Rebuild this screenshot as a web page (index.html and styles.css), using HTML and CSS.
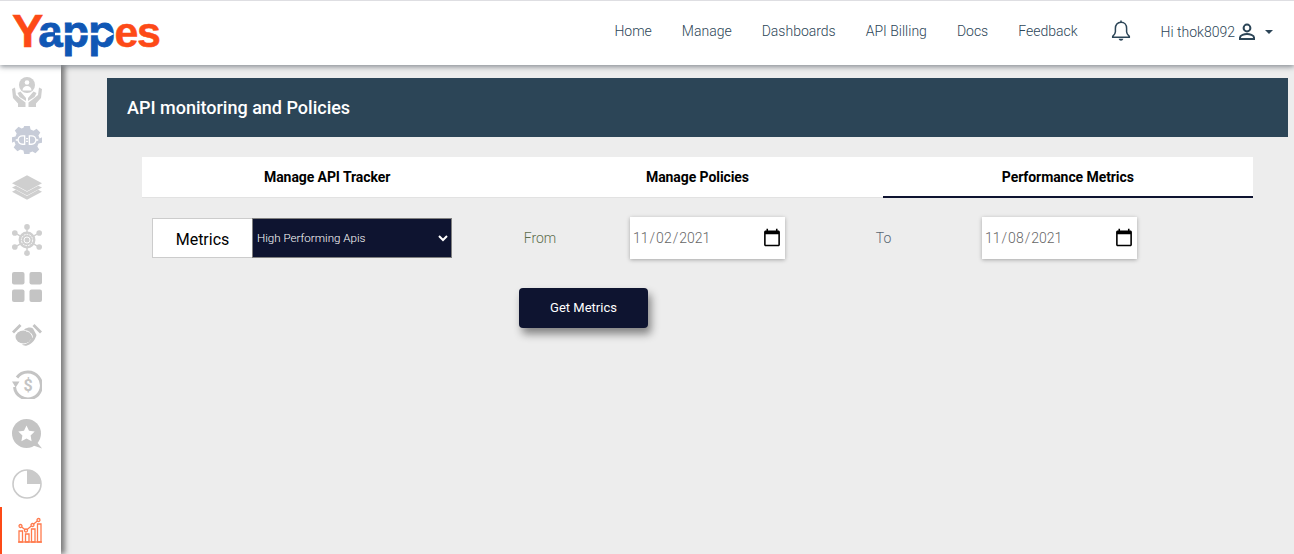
FILE: index.html
```html
<!DOCTYPE html>
<html lang="en">
<head>
<meta charset="utf-8">
<title>API monitoring and Policies</title>
<link rel="stylesheet" href="styles.css">
</head>
<body>
<header class="topbar">
  <a class="logo" href="#"><span class="logo-y">Y</span><span class="logo-app">app</span><span class="logo-es">es</span><svg class="logo-arrow" viewBox="0 0 60 12" width="60" height="12"><path d="M0 4.700H50V1L59 6 50 11V7.300H0Z" fill="#fff"/></svg></a>
  <nav class="nav">
    <a href="#">Home</a><a href="#">Manage</a><a href="#">Dashboards</a><a href="#">API Billing</a><a href="#">Docs</a><a href="#">Feedback</a>
  </nav>
  <svg class="bell" viewBox="0 0 20 22" width="20" height="22" fill="none" stroke="#2c4557" stroke-width="1.500"><path d="M10 2.200c-3.600 0-5.600 2.700-5.600 6v3.600c0 1.800-1.200 3.200-2.700 4.600v.8h16.600v-.8c-1.500-1.400-2.700-2.800-2.700-4.600V8.200c0-3.300-2-6-5.600-6z"/><path d="M10 .4v1.800"/><path d="M7.600 18.800c.4 1.300 1.300 2 2.400 2s2-.7 2.400-2z" fill="#2c4557" stroke="none"/></svg>
  <div class="user">
    <span>Hi thok8092</span>
    <svg viewBox="0 0 24 24" width="24" height="24" fill="none" stroke="#2c4557" stroke-width="2"><circle cx="12" cy="8" r="3.400"/><path d="M5 19v-1.500c0-2.300 4.500-3.500 7-3.500s7 1.200 7 3.500V19z"/></svg>
    <i class="caret"></i>
  </div>
</header>
<div class="shell">
  <aside class="sidebar">
    <a class="side-item" href="#"><svg viewBox="0 0 30 30" width="30" height="30" fill="#cfcfcf"><circle cx="15" cy="8" r="8"/><circle cx="15" cy="5.500" r="2.300" fill="#fff"/><path d="M10.500 13.500c0-3 2-4.500 4.500-4.500s4.500 1.500 4.500 4.500z" fill="#fff"/><path d="M0 12l3-1.500 1 7.500 5.500 4.500 4 3V30H6v-3.500L1 21z"/><path d="M30 12l-3-1.500-1 7.500-5.500 4.500-4 3V30H24v-3.500L29 21z"/><path d="M5.500 16l3-1.500 5.500 6.500v3L7.500 20z"/><path d="M24.500 16l-3-1.500-5.500 6.500v3l6.500-4z"/></svg></a>
    <a class="side-item" href="#"><svg viewBox="0 0 32 32" width="30" height="30"><path d="M13 1h6l.8 3.700 3.200 1.300 3.200-2 4 4-2 3.200 1.300 3.200L32 13v6l-3.700.8-1.300 3.200 2 3.200-4 4-3.200-2-3.200 1.300L19 31h-6l-.8-3.700L9 26l-3.200 2-4-4 2-3.200-1.300-3.200L0 19v-6l3.700-.8L5 9 3 5.800l4-4 3.200 2 2-.8z" fill="#c7ccd8"/><g fill="none" stroke="#fff" stroke-width="1.400"><path d="M13.500 11.500H11a4.500 4.500 0 0 0 0 9h2.500z"/><path d="M18.500 11.500H21a4.500 4.500 0 0 1 0 9h-2.500z"/><path d="M15 14.500h2M15 17.500h2M4 16h2.500M25.500 16H28"/></g></svg></a>
    <a class="side-item" href="#"><svg viewBox="0 0 32 26" width="30" height="25" fill="#cfcfcf"><path d="M16 0l16 8.500-16 8.500L0 8.500z"/><path d="M0 13l4-2 12 6.500L28 11l4 2-16 8.500z"/><path d="M0 17.500l4-2 12 6.500 12-6.500 4 2L16 26z"/></svg></a>
    <a class="side-item" href="#"><svg viewBox="0 0 32 34" width="30" height="34" fill="#cfcfcf" stroke="#cfcfcf"><path d="M16 4v26M4 10l24 14M28 10L4 24" stroke-width="1.500"/><g stroke="none"><circle cx="16" cy="3" r="3"/><circle cx="16" cy="31" r="3"/><circle cx="3" cy="9.500" r="3"/><circle cx="29" cy="9.500" r="3"/><circle cx="3" cy="24.500" r="3"/><circle cx="29" cy="24.500" r="3"/><circle cx="16" cy="17" r="9"/></g><circle cx="16" cy="17" r="6" fill="none" stroke="#fff" stroke-width="1" stroke-dasharray="2 1"/><circle cx="16" cy="17" r="3.200" fill="none" stroke="#fff" stroke-width="1"/></svg></a>
    <a class="side-item" href="#"><svg viewBox="0 0 30 30" width="30" height="30" fill="#c4c4c4"><rect width="12.500" height="12.500" rx="2"/><rect x="17.500" width="12.500" height="12.500" rx="2"/><rect y="17.500" width="12.500" height="12.500" rx="2"/><rect x="17.500" y="17.500" width="12.500" height="12.500" rx="2"/></svg></a>
    <a class="side-item" href="#"><svg viewBox="0 0 30 23" width="30" height="23" fill="#c4c4c4"><path d="M0 7.500L7.500 0l2 2L2 9.500zM30 7.500L22.500 0l-2 2L28 9.500z"/><ellipse cx="11.500" cy="13" rx="8" ry="6.500"/><path d="M12 5.500c4-2.500 7-2.500 9-1l3.500 6.500c-1 4-4 9-9.500 10.500-2 .5-4 0-5-1 5 0 9-3 9-7.500 0-3-3-6-7-7.500z"/><path d="M14 7c3 0 6.500 3 6.500 6.500" fill="none" stroke="#fff" stroke-width="1"/></svg></a>
    <a class="side-item" href="#"><svg viewBox="0 0 30 30" width="30" height="30" fill="none" stroke="#c4c4c4" stroke-width="3"><path d="M5 8.500A13.500 13.500 0 1 1 2.500 18"/><path d="M0 12.500h7.500l-3.800 6z" fill="#c4c4c4" stroke="none"/><text x="16" y="21.500" text-anchor="middle" class="dollar">$</text></svg></a>
    <a class="side-item" href="#"><svg viewBox="0 0 30 30" width="30" height="30" fill="#c4c4c4"><circle cx="14.500" cy="14.500" r="14.500"/><path d="M20 26l4-4 6 7.500z"/><path d="M14.500 6.500l2.500 5.300 5.700.8-4.100 4 1 5.700-5.100-2.700-5.100 2.700 1-5.700-4.100-4 5.700-.8z" fill="#fff"/></svg></a>
    <a class="side-item" href="#"><svg viewBox="0 0 30 30" width="30" height="30"><circle cx="15" cy="15" r="14" fill="none" stroke="#cacaca" stroke-width="1.600"/><path d="M15 1a14 14 0 0 1 14 14H15z" fill="#cacaca"/></svg></a>
    <a class="side-item active" href="#"><svg viewBox="0 0 26 26" width="26" height="26" fill="none" stroke="#ff7a4d" stroke-width="1.300"><path d="M1 25h24"/><path d="M2 14h3.500v11H2zM8.500 17H12v8H8.500zM14.500 12H18v13h-3.500zM20.500 7H24v18h-3.500z"/><path d="M3.500 9l5.500 4.500 6.500-5.500 6-5"/><g fill="#fff"><circle cx="3.500" cy="9" r="1.500"/><circle cx="9" cy="13.500" r="1.500"/><circle cx="15.500" cy="8" r="1.500"/><circle cx="21.500" cy="3" r="1.500"/></g></svg></a>
  </aside>
  <main class="content">
    <div class="banner">API monitoring and Policies</div>
    <section class="panel">
      <div class="tabs">
        <a class="tab" href="#">Manage API Tracker</a>
        <a class="tab" href="#">Manage Policies</a>
        <a class="tab selected" href="#">Performance Metrics</a>
      </div>
      <div class="filters">
        <label class="metric-label" for="metric">Metrics</label>
        <select class="metric-select" id="metric"><option>High Performing Apis</option><option>Low Performing Apis</option></select>
        <span class="field-label from">From</span>
        <input class="date" type="date" value="2021-11-02" aria-label="From">
        <span class="field-label to">To</span>
        <input class="date" type="date" value="2021-11-08" aria-label="To">
      </div>
      <button class="get-btn" type="button">Get Metrics</button>
    </section>
  </main>
</div>
</body>
</html>
```
FILE: styles.css
```css
* { box-sizing: border-box; }
html, body { margin: 0; height: 100%; }
body {
  height: 554px;
  overflow: hidden;
  background: #ededed;
  font-family: Roboto, "Liberation Sans", sans-serif;
  display: flex;
  flex-direction: column;
}
a { text-decoration: none; color: inherit; }

.topbar {
  position: relative;
  z-index: 3;
  flex: none;
  height: 65px;
  background: #fff;
  border-top: 1px solid #dedee2;
  box-shadow: 0 2px 5px rgba(60, 70, 80, .55);
  display: flex;
  align-items: center;
  padding-left: 12px;
}
.logo {
  position: relative;
  display: block;
  width: 150px;
  height: 54px;
  margin-top: -4px;
  font-family: "Liberation Sans", Arial, sans-serif;
  font-weight: 700;
  font-size: 44px;
  line-height: 54px;
  white-space: nowrap;
}
.logo-y { color: #fd4a17; font-size: 47px; letter-spacing: -5px; -webkit-text-stroke: .5px #fd4a17; }
.logo-app { color: #1057b5; letter-spacing: -.7px; -webkit-text-stroke: .8px #1057b5; }
.logo-es { color: #fd4a17; letter-spacing: -1.500px; font-size: 43px; -webkit-text-stroke: .5px #fd4a17; }
.logo-arrow { position: absolute; left: 43px; top: 24px; }

.nav {
  margin-left: auto;
  margin-top: -4px;
  display: flex;
  gap: 30px;
  font-size: 14px;
  font-weight: 300;
  color: #2c4557;
}
.nav a { display: block; }
.bell { margin-left: 33px; margin-top: -4px; }
.user {
  display: flex;
  align-items: center;
  margin-left: 30px;
  margin-right: 21px;
  margin-top: -2px;
  font-size: 14px;
  font-weight: 300;
  color: #2c4557;
}
.caret {
  margin-left: 6px;
  border: 4px solid transparent;
  border-top-color: #2c4557;
  border-bottom: 0;
}

.shell { flex: 1; display: flex; min-height: 0; }
.sidebar {
  position: relative;
  z-index: 2;
  flex: none;
  width: 61px;
  background: #fff;
  box-shadow: 4px 0 5px rgba(50, 50, 50, .6);
  display: flex;
  flex-direction: column;
  padding-top: 3px;
}
.side-item {
  position: relative;
  flex: none;
  height: 48px;
  display: flex;
  align-items: center;
  padding-left: 12px;
}
.side-item:nth-child(3) { margin-top: -1px; }
.side-item:nth-child(4) { margin-top: 5px; }
.side-item:nth-child(5) { margin-top: -1px; }
.side-item:nth-child(7) { margin-top: 1px; }
.side-item:nth-child(8) { margin-top: 2px; }
.side-item:nth-child(9) { margin-top: 2px; }
.side-item.active { margin-top: -2px; padding-left: 17px; }
.side-item.active::before {
  content: "";
  position: absolute;
  left: 0;
  top: 1px;
  bottom: 0;
  width: 2px;
  background: #fd4a17;
}
.dollar {
  font: 700 16px Roboto, sans-serif;
  fill: #c4c4c4;
  stroke: none;
}

.content { flex: 1; padding: 13px 6px 0 46px; min-width: 0; }
.banner {
  height: 59px;
  background: #2c4557;
  color: #fff;
  font-size: 18px;
  font-weight: 500;
  line-height: 59px;
  padding-left: 20px;
}
.panel { padding: 20px 35px 0; }
.tabs {
  display: grid;
  grid-template-columns: repeat(3, 1fr);
  width: 1111px;
  background: #fff;
  border-bottom: 1px solid #e2e2e2;
}
.tab {
  height: 41px;
  font-size: 14px;
  font-weight: 700;
  line-height: 40px;
  letter-spacing: -.08px;
  text-align: center;
  color: #000;
  margin-bottom: -1px;
}
.tab.selected { border-bottom: 2px solid #0e1330; }

.filters {
  display: flex;
  align-items: center;
  height: 42px;
  margin-top: 19px;
  padding-left: 10px;
}
.metric-label {
  width: 100px;
  height: 40px;
  background: #fff;
  border: 1px solid #ccc;
  border-right: 0;
  font-size: 16px;
  line-height: 41px;
  text-align: center;
  color: #000;
}
.metric-select {
  width: 200px;
  height: 40px;
  background-color: #0e1430;
  color: #fff;
  border: 1px solid #808080;
  border-radius: 0;
  font-family: Roboto, sans-serif;
  font-size: 11.600px;
  font-weight: 300;
  padding: 0;
}
.field-label {
  font-size: 14px;
  font-weight: 300;
  text-align: center;
}
.from { width: 178px; padding-right: 2px; color: #5d6e4e; }
.to { width: 197px; color: #5a6672; }
.date {
  width: 155px;
  height: 42px;
  background: #fff;
  border: 0;
  padding: 0 2px;
  border-radius: 0;
  font-family: Roboto, sans-serif;
  font-size: 14px;
  font-weight: 300;
  color: #666;
  box-shadow: 0 1px 4px rgba(0, 0, 0, .3);
}
.date::-webkit-calendar-picker-indicator {
  width: 20px;
  height: 20px;
  padding: 0;
  margin: 0 1px 0 0;
}
.get-btn {
  display: block;
  width: 129px;
  height: 40px;
  margin: 29px 0 0 377px;
  padding: 0 0 2px;
  background: #0e1430;
  color: #fff;
  border: 0;
  border-radius: 4px;
  font-family: Roboto, sans-serif;
  font-size: 13px;
  box-shadow: 3px 6px 8px rgba(0, 0, 0, .45);
}
```
